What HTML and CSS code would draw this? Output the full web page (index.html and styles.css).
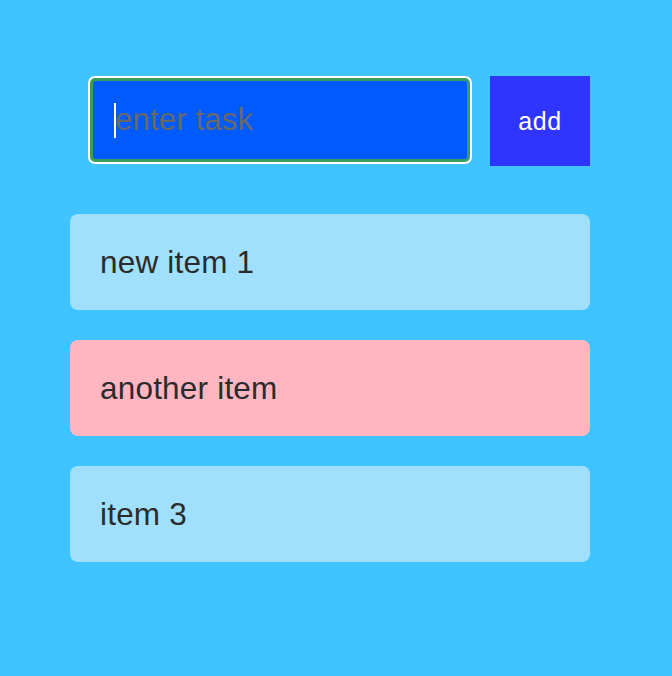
FILE: index.html
```html
<!DOCTYPE html>
<html lang="en">
<head>
<meta charset="utf-8">
<title>Tasks</title>
<link rel="stylesheet" href="styles.css">
</head>
<body>
<main class="app">
  <form class="entry">
    <div class="field"><span class="caret"></span><span class="placeholder">enter task</span></div>
    <button type="button" class="add">add</button>
  </form>
  <ul class="tasks">
    <li class="task">new item 1</li>
    <li class="task task-alt">another item</li>
    <li class="task">item 3</li>
  </ul>
</main>
</body>
</html>
```
FILE: styles.css
```css
html, body {
  margin: 0;
  padding: 0;
  background: #40c4ff;
  height: 100%;
}
body {
  font-family: "Liberation Sans", Arial, Helvetica, sans-serif;
}
.app {
  width: 520px;
  margin-left: 70px;
  padding-top: 76px;
}
.entry {
  display: flex;
  align-items: flex-start;
  gap: 20px;
  margin: 0;
}
.field {
  box-sizing: border-box;
  margin-left: 20px;
  margin-top: 2px;
  width: 380px;
  height: 84px;
  background: #005bff;
  border: 3px solid #3a9d5d;
  border-radius: 5px;
  outline: 2px solid #ffffff;
  display: flex;
  align-items: center;
  padding-left: 22px;
  position: relative;
}
.placeholder {
  font-size: 31px;
  color: #686868;
  letter-spacing: 0.2px;
}
.caret {
  position: absolute;
  left: 21px;
  top: 22px;
  width: 2px;
  height: 35px;
  background: #ffffff;
}
.add {
  box-sizing: border-box;
  width: 100px;
  height: 90px;
  background: #3034ff;
  border: none;
  color: #ffffff;
  font-family: "Liberation Sans", Arial, sans-serif;
  font-size: 25px;
  padding: 0;
  letter-spacing: 0.6px;
}
.tasks {
  list-style: none;
  margin: 48px 0 0 0;
  padding: 0;
  display: flex;
  flex-direction: column;
  gap: 30px;
}
.task {
  background: #a0e0fd;
  border-radius: 8px;
  padding: 30px;
  font-size: 31.5px;
  line-height: 36px;
  color: #2b2b2b;
  letter-spacing: 0.2px;
}
.task-alt {
  background: #ffb6c1;
}
```
